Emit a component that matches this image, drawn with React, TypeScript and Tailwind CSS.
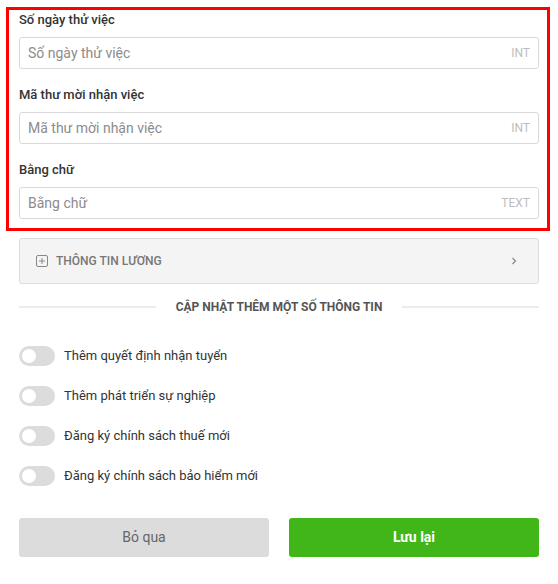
import { useState } from "react"

const fields = [
	{ label: "Số ngày thử việc", type: "INT" },
	{ label: "Mã thư mời nhận việc", type: "INT" },
	{ label: "Bằng chữ", type: "TEXT" },
]

const options = [
	"Thêm quyết định nhận tuyển",
	"Thêm phát triển sự nghiệp",
	"Đăng ký chính sách thuế mới",
	"Đăng ký chính sách bảo hiểm mới",
]

function Toggle({ on, onClick }: { on: boolean; onClick: () => void }) {
	return (
		<button
			type="button"
			onClick={onClick}
			className={`flex h-[20px] w-[36px] shrink-0 items-center rounded-full px-[3px] ${
				on ? "justify-end bg-[#41b619]" : "justify-start bg-[#dcdcdc]"
			}`}
		>
			<span className="h-[14px] w-[14px] rounded-full bg-white" />
		</button>
	)
}

export default function App() {
	const [toggles, setToggles] = useState([false, false, false, false])

	return (
		<div className="h-[584px] w-[558px] bg-white font-['Roboto',sans-serif] text-[#333]">
			<div className="pt-[7px]">
				{/* khung đỏ bao nhóm trường nhập */}
				<div className="ml-[6px] w-[544px] border-[3px] border-[#f00] pb-[9px] pl-[10px] pr-[8px]">
					{fields.map((f, i) => (
						<div key={f.label} className={i > 0 ? "mt-[16px]" : ""}>
							<div className="h-[20px] text-[13px] font-medium leading-[20px] text-[#333]">
								{f.label}
							</div>
							<div className="mt-[7px] flex h-[32px] items-center rounded-[3px] border border-[#d9d9d9] px-[8px]">
								<input
									placeholder={f.label}
									className="min-w-0 flex-1 bg-transparent text-[14px] text-[#333] outline-none placeholder:text-[#8c8c8c]"
								/>
								<span className="text-[12px] text-[#bdbdbd]">{f.type}</span>
							</div>
						</div>
					))}
				</div>
			</div>

			<div className="px-[19px]">
				<div className="mt-[7px] flex h-[46px] items-center rounded-[3px] border border-[#dcdcdc] bg-[#f4f4f4] pl-[16px] pr-[20px]">
					<svg width="12" height="12" viewBox="0 0 12 12" className="shrink-0">
						<rect x="0.5" y="0.5" width="11" height="11" rx="1.5" fill="none" stroke="#888" />
						<path d="M6 3v6M3 6h6" stroke="#888" strokeWidth="1" />
					</svg>
					<span className="ml-[8px] flex-1 text-[12px] font-medium uppercase text-[#777]">
						Thông tin lương
					</span>
					<svg width="8" height="10" viewBox="0 0 8 10">
						<path d="M2.5 2l3 3-3 3" fill="none" stroke="#888" strokeWidth="1.2" />
					</svg>
				</div>

				<div className="mt-[14px] flex items-center gap-[20px]">
					<div className="h-[2px] flex-1 bg-[#ececec]" />
					<span className="text-[12px] font-bold uppercase text-[#555]">
						Cập nhật thêm một số thông tin
					</span>
					<div className="h-[2px] flex-1 bg-[#ececec]" />
				</div>

				<div className="mt-[30px] flex flex-col gap-[20px]">
					{options.map((o, i) => (
						<div key={o} className="flex h-[20px] items-center gap-[9px]">
							<Toggle
								on={toggles[i]}
								onClick={() =>
									setToggles((t) => t.map((v, j) => (j === i ? !v : v)))
								}
							/>
							<span className="text-[13px] text-[#333]">{o}</span>
						</div>
					))}
				</div>

				<div className="mt-[32px] flex gap-[20px]">
					<button
						type="button"
						className="h-[39px] flex-1 rounded-[3px] bg-[#dcdcdc] text-[14px] text-[#666]"
					>
						Bỏ qua
					</button>
					<button
						type="button"
						className="h-[39px] flex-1 rounded-[3px] bg-[#41b619] text-[14px] font-bold text-white"
					>
						Lưu lại
					</button>
				</div>
			</div>
		</div>
	)
}
